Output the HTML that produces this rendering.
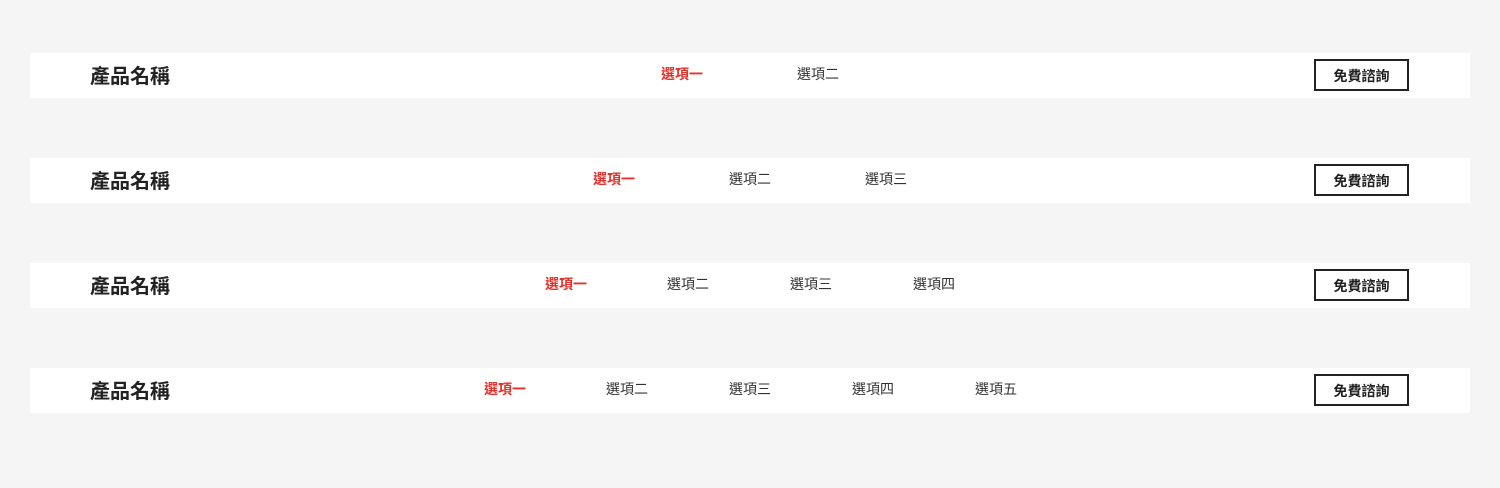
<!DOCTYPE html>
<html><head><meta charset="utf-8"><style>
body{margin:0;width:1500px;height:488px;background:#f5f5f5;position:relative;font-family:"Liberation Sans","Noto Sans CJK TC",sans-serif;overflow:hidden}
.bar{position:absolute;left:30px;width:1440px;height:45px;background:#fff}
.t{position:absolute;left:60px;top:11px;font-size:20px;font-weight:bold;color:#222;line-height:26px}
.n{position:absolute;top:12px;font-size:14px;color:#333;line-height:18px}
.a{color:#e8302a;font-weight:bold}
.b{position:absolute;left:1284px;top:6px;width:91px;height:28px;border:2px solid #222;font-size:14px;font-weight:bold;color:#222;text-align:center;line-height:30px}
</style></head><body>
<div class="bar" style="top:53px"><div class="t">產品名稱</div>
<div class="n a" style="left:631px">選項一</div><div class="n" style="left:767px">選項二</div>
<div class="b">免費諮詢</div></div>
<div class="bar" style="top:158px"><div class="t">產品名稱</div>
<div class="n a" style="left:563px">選項一</div><div class="n" style="left:699px">選項二</div><div class="n" style="left:835px">選項三</div>
<div class="b">免費諮詢</div></div>
<div class="bar" style="top:263px"><div class="t">產品名稱</div>
<div class="n a" style="left:515px">選項一</div><div class="n" style="left:637px">選項二</div><div class="n" style="left:760px">選項三</div><div class="n" style="left:883px">選項四</div>
<div class="b">免費諮詢</div></div>
<div class="bar" style="top:368px"><div class="t">產品名稱</div>
<div class="n a" style="left:454px">選項一</div><div class="n" style="left:576px">選項二</div><div class="n" style="left:699px">選項三</div><div class="n" style="left:822px">選項四</div><div class="n" style="left:945px">選項五</div>
<div class="b">免費諮詢</div></div>
</body></html>
